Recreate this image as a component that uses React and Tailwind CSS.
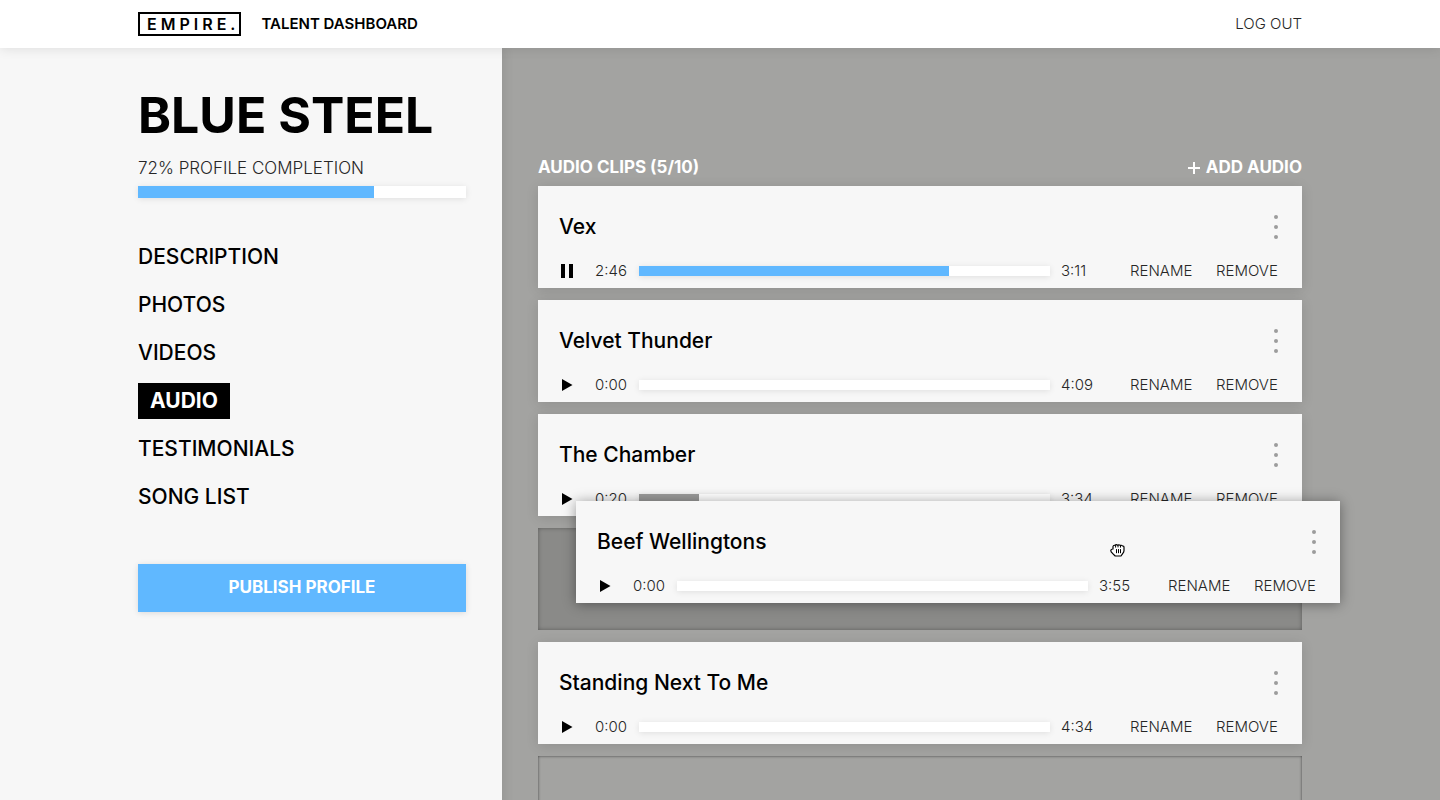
import { useState } from 'react'

const navItems = ['Description', 'Photos', 'Videos', 'Audio', 'Testimonials', 'Song List']

const initialClips = [
  { id: 'vex', title: 'Vex', elapsed: '2:46', total: '3:11', progress: 75.5, playing: true },
  { id: 'velvet', title: 'Velvet Thunder', elapsed: '0:00', total: '4:09', progress: 0 },
  { id: 'chamber', title: 'The Chamber', elapsed: '0:20', total: '3:34', progress: 14.6 },
  { id: 'beef', title: 'Beef Wellingtons', elapsed: '0:00', total: '3:55', progress: 0, dragging: true },
  { id: 'standing', title: 'Standing Next To Me', elapsed: '0:00', total: '4:34', progress: 0 },
]

export default function App() {
  const [section, setSection] = useState('Audio')
  const [clips, setClips] = useState(initialClips)

  const updateClip = (id, changes) =>
    setClips((list) => list.map((clip) => (clip.id === id ? { ...clip, ...changes } : clip)))

  return (
    <div className="flex min-h-screen flex-col overflow-x-hidden bg-[#a3a3a1] font-['Inter','Liberation_Sans',sans-serif] text-black">
      <Header />
      <div className="flex flex-1">
        <Sidebar section={section} onSelect={setSection} />
        <main className="min-w-0 grow basis-[800px]">
          <div className="max-w-[800px] pt-[108px] pl-9">
            <div className="flex h-6 items-center justify-between text-[17px] font-bold text-white">
              <h2>AUDIO CLIPS (5/10)</h2>
              <button type="button" className="flex items-center gap-1.5">
                <PlusIcon />
                ADD AUDIO
              </button>
            </div>
            <ul className="mt-1.5 space-y-3">
              {clips.map((clip) => (
                <li key={clip.id}>
                  {clip.dragging ? (
                    <div className="relative h-[102px] bg-[#8a8a88] shadow-[inset_0_0_4px_rgba(0,0,0,0.35)]">
                      <div className="absolute -top-[27px] left-[38px] z-10 w-full cursor-grabbing">
                        <ClipCard clip={clip} onChange={updateClip} />
                        <GrabCursor />
                      </div>
                    </div>
                  ) : (
                    <ClipCard clip={clip} onChange={updateClip} />
                  )}
                </li>
              ))}
              <li className="h-[102px] shadow-[inset_0_0_3px_rgba(0,0,0,0.6)]" />
            </ul>
          </div>
        </main>
      </div>
    </div>
  )
}

function Header() {
  return (
    <header className="relative z-20 bg-white shadow-[0_0_12px_rgba(0,0,0,0.12)]">
      <div className="mx-auto flex h-12 max-w-[1164px] items-center">
        <a href="#home" className="flex h-6 items-center border-2 border-black pl-[7px] text-base font-semibold tracking-[4px]">
          EMPIRE.
        </a>
        <span className="ml-5 text-[15px] font-semibold">TALENT DASHBOARD</span>
        <a href="#logout" className="ml-auto text-[15px] font-light text-neutral-800">LOG OUT</a>
      </div>
    </header>
  )
}

function Sidebar({ section, onSelect }) {
  return (
    <aside className="relative flex grow basis-[364px] justify-end bg-[#f7f7f7] shadow-[0_0_12px_rgba(0,0,0,0.12)]">
      <div className="w-[364px] pt-[43px] pr-9">
        <h1 className="text-[50px] leading-12 font-bold whitespace-nowrap">BLUE STEEL</h1>
        <p className="mt-[17px] h-6 text-[17px] leading-6 font-light text-neutral-800" id="completion">72% PROFILE COMPLETION</p>
        <div
          role="progressbar"
          aria-labelledby="completion"
          aria-valuenow={72}
          className="mt-1.5 h-3 bg-white shadow-[0_1px_6px_rgba(0,0,0,0.1)]"
        >
          <div className="h-full bg-[#60b8ff]" style={{ width: '72%' }} />
        </div>

        <nav className="mt-[41px] flex flex-col items-start gap-3">
          {navItems.map((item) => (
            <a
              key={item}
              href={`#${item.toLowerCase().replace(' ', '-')}`}
              onClick={() => onSelect(item)}
              className={
                item === section
                  ? 'bg-black px-3 text-[21px] leading-9 font-bold text-white uppercase'
                  : 'text-[21px] leading-9 font-medium uppercase'
              }
            >
              {item}
            </a>
          ))}
        </nav>

        <button type="button" className="mt-[49px] h-12 w-full bg-[#60b8ff] text-[17px] font-bold text-white shadow-[0_1px_6px_rgba(0,0,0,0.12)]">
          PUBLISH PROFILE
        </button>
      </div>
    </aside>
  )
}

function ClipCard({ clip, onChange }) {
  const fill = clip.playing ? '#60b8ff' : '#9a9a99'

  return (
    <article
      className={
        clip.dragging
          ? 'bg-[#f7f7f7] px-[21px] pt-[25px] pb-[5px] shadow-[0_1px_12px_rgba(0,0,0,0.4)]'
          : 'bg-[#f7f7f7] px-[21px] pt-[25px] pb-[5px] shadow-[0_2px_12px_rgba(0,0,0,0.12)]'
      }
    >
      <div className="flex h-8 items-center justify-between">
        <h3 className="text-[21px] font-medium">{clip.title}</h3>
        <button type="button" aria-label="Reorder clip" className="flex w-2.5 flex-col items-center gap-1.5">
          <span className="size-1 rounded-full bg-[#9c9c9c]" />
          <span className="size-1 rounded-full bg-[#9c9c9c]" />
          <span className="size-1 rounded-full bg-[#9c9c9c]" />
        </button>
      </div>
      <div className="mt-4 flex h-6 items-center text-[15px] font-light text-neutral-800">
        <button
          type="button"
          aria-label={clip.playing ? 'Pause' : 'Play'}
          className="w-4 text-black"
          onClick={() => onChange(clip.id, { playing: !clip.playing })}
        >
          {clip.playing ? <PauseIcon /> : <PlayIcon />}
        </button>
        <span className="w-[52px] text-right">{clip.elapsed}</span>
        <input
          type="range"
          aria-label={`Position in ${clip.title}`}
          min="0"
          max="100"
          step="0.1"
          value={clip.progress}
          onChange={(e) => onChange(clip.id, { progress: Number(e.target.value) })}
          className="mr-[11px] ml-3 h-2.5 min-w-0 flex-1 appearance-none shadow-[0_1px_6px_rgba(0,0,0,0.1)] [&::-webkit-slider-thumb]:size-0 [&::-webkit-slider-thumb]:appearance-none"
          style={{ background: `linear-gradient(to right, ${fill} ${clip.progress}%, #fff ${clip.progress}%)` }}
        />
        <span className="w-[69px]">{clip.total}</span>
        <button type="button" className="w-[86px] text-left">RENAME</button>
        <button type="button" className="w-[65px] text-left">REMOVE</button>
      </div>
    </article>
  )
}

function PlusIcon() {
  return (
    <svg viewBox="0 0 12 12" className="size-3" stroke="currentColor" strokeWidth="2" aria-hidden="true">
      <path d="M6 0v12M0 6h12" />
    </svg>
  )
}

function PlayIcon() {
  return (
    <svg viewBox="0 0 16 16" className="size-4" aria-hidden="true">
      <path d="M3 2l10.500 6-10.500 6z" />
    </svg>
  )
}

function PauseIcon() {
  return (
    <svg viewBox="0 0 16 16" className="size-4" aria-hidden="true">
      <path d="M2 1h4v14H2zM10 1h4v14h-4z" />
    </svg>
  )
}

// closed hand shown over the clip being moved
function GrabCursor() {
  return (
    <svg
      viewBox="0 0 15 13"
      className="pointer-events-none absolute top-[43px] left-[534px] h-[13px] w-[15px]"
      fill="#fff"
      stroke="#000"
      strokeWidth="1.2"
      strokeLinejoin="round"
      strokeLinecap="round"
      aria-hidden="true"
    >
      <path d="M3 5V2.5Q3.3 1 5 1.3Q6.200 .2 7.500 1.200Q9 .300 10.300 1.400Q11.800 .900 12.500 2Q14 1.800 14 3.500V6.500Q14 8 12.800 9.300L11 12H5.200L2.500 9.300Q.700 8 .800 6.200Q1.200 5 3 5Z" />
      <path d="M5.600 1.500V3.200M8 1.300V3M10.500 1.500V3.200M6.500 5.500V8.800M8.500 5.500V8.800M10.500 5.500V8.800" strokeWidth="1" />
    </svg>
  )
}
